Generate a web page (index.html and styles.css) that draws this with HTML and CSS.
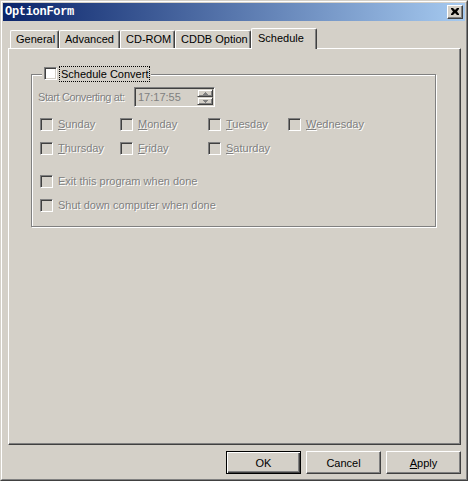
FILE: index.html
```html
<!DOCTYPE html>
<html>
<head>
<meta charset="utf-8">
<title>OptionForm</title>
<link rel="stylesheet" href="styles.css">
</head>
<body>
<div class="window">
  <div class="frame">
    <div class="titlebar">
      <span class="title">OptionForm</span>
      <div class="close">
        <svg width="8" height="7" viewBox="0 0 8 7"><path d="M0 0h2l2 2 2-2h2v1L6 3.5 8 6v1H6L4 5 2 7H0V6l2-2.5L0 1z" fill="#000"/></svg>
      </div>
    </div>
    <div class="content">
      <div class="tabs">
        <div class="tab t-general">General</div>
        <div class="tab t-advanced">Advanced</div>
        <div class="tab t-cdrom">CD-ROM</div>
        <div class="tab t-cddb">CDDB Option</div>
        <div class="tab active">Schedule</div>
      </div>
      <div class="panel">
        <div class="group">
          <div class="legend">
            <span class="cb"></span>
            <span class="focus">Schedule Convert</span>
          </div>
          <div class="time-row">
            <span class="label disabled">Start Converting at:</span>
            <div class="timebox">
              <span class="time-text">17:17:55</span>
              <div class="spin">
                <div class="spin-btn"><svg width="5" height="3" viewBox="0 0 5 3"><path d="M2 0h1v1h1v1h1v1H0V2h1V1h1z" fill="#808080"/></svg></div>
                <div class="spin-btn"><svg width="5" height="3" viewBox="0 0 5 3"><path d="M0 0h5v1H4v1H3v1H2V2H1V1H0z" fill="#808080"/></svg></div>
              </div>
            </div>
          </div>
          <div class="days">
            <div class="item"><span class="cb off"></span><span class="disabled"><u>S</u>unday</span></div>
            <div class="item"><span class="cb off"></span><span class="disabled"><u>M</u>onday</span></div>
            <div class="item"><span class="cb off"></span><span class="disabled"><u>T</u>uesday</span></div>
            <div class="item"><span class="cb off"></span><span class="disabled"><u>W</u>ednesday</span></div>
            <div class="item"><span class="cb off"></span><span class="disabled"><u>T</u>hursday</span></div>
            <div class="item"><span class="cb off"></span><span class="disabled"><u>F</u>riday</span></div>
            <div class="item"><span class="cb off"></span><span class="disabled"><u>S</u>aturday</span></div>
          </div>
          <div class="opts">
            <div class="item"><span class="cb off"></span><span class="disabled">Exit this program when done</span></div>
            <div class="item"><span class="cb off"></span><span class="disabled">Shut down computer when done</span></div>
          </div>
        </div>
      </div>
      <div class="buttons">
        <div class="btn default">OK</div>
        <div class="btn">Cancel</div>
        <div class="btn"><u>A</u>pply</div>
      </div>
    </div>
  </div>
</div>
</body>
</html>
```
FILE: styles.css
```css
html, body {
  margin: 0;
  padding: 0;
  background: #D4D0C8;
}

body {
  font-family: "Liberation Sans", Arial, sans-serif;
  font-size: 11px;
  color: #000;
}

.window {
  width: 468px;
  height: 481px;
  box-sizing: border-box;
  border: 1px solid;
  border-color: #D4D0C8 #404040 #404040 #D4D0C8;
  background: #D4D0C8;
}

.frame {
  height: 100%;
  box-sizing: border-box;
  border: 1px solid;
  border-color: #FFFFFF #808080 #808080 #FFFFFF;
  padding: 1px;
  display: flex;
  flex-direction: column;
}

.titlebar {
  height: 18px;
  flex: none;
  background: linear-gradient(to right, #0A246A, #A6CAF0);
  display: flex;
  align-items: center;
  justify-content: space-between;
  padding: 0 2px 0 2px;
}

.title {
  font-family: "Liberation Mono", "Courier New", monospace;
  font-weight: bold;
  font-size: 12px;
  letter-spacing: -0.3px;
  color: #FFFFFF;
}

.close {
  width: 16px;
  height: 14px;
  box-sizing: border-box;
  border: 1px solid;
  border-color: #FFFFFF #404040 #404040 #FFFFFF;
  box-shadow: inset -1px -1px 0 #808080;
  background: #D4D0C8;
  display: flex;
  align-items: center;
  justify-content: center;
  padding-bottom: 1px;
  padding-right: 1px;
}

.close svg {
  display: block;
}

.content {
  flex: 1;
  display: flex;
  flex-direction: column;
  padding: 7px 4px 4px 5px;
}

.tabs {
  height: 20px;
  flex: none;
  display: flex;
  align-items: flex-end;
  padding-left: 2px;
}

.tab {
  height: 18px;
  box-sizing: border-box;
  line-height: 17px;
  padding-left: 5px;
  border-top: 1px solid #FFFFFF;
  border-left: 1px solid #FFFFFF;
  border-right: 1px solid #404040;
  box-shadow: inset -1px 0 0 #808080;
  border-top-left-radius: 2px;
  border-top-right-radius: 2px;
  white-space: nowrap;
}

.t-general { width: 49px; }
.t-advanced { width: 61px; }
.t-cdrom { width: 55px; }
.t-cddb { width: 76px; }

.tab.active {
  width: 66px;
  height: 21px;
  margin-bottom: -1px;
  line-height: 18px;
  padding-left: 6px;
  position: relative;
  z-index: 1;
  background: #D4D0C8;
}

.panel {
  flex: 1;
  box-sizing: border-box;
  border: 1px solid;
  border-color: #FFFFFF #404040 #404040 #FFFFFF;
  box-shadow: inset -1px -1px 0 #808080;
  padding-top: 25px;
  padding-left: 22px;
}

.group {
  position: relative;
  width: 405px;
  height: 153px;
  box-sizing: border-box;
  border: 1px solid #808080;
  box-shadow: inset 1px 1px 0 #FFFFFF, 1px 1px 0 #FFFFFF;
  padding: 12px 0 0 6px;
}

.legend {
  position: absolute;
  left: 10px;
  top: -9px;
  height: 15px;
  padding: 0 2px;
  background: #D4D0C8;
  display: flex;
  align-items: center;
  gap: 3px;
}

.focus {
  outline: 1px dotted #000;
  outline-offset: 0;
  padding: 0 1px;
  line-height: 14px;
}

.cb {
  display: block;
  flex: none;
  width: 13px;
  height: 13px;
  box-sizing: border-box;
  border: 1px solid;
  border-color: #808080 #FFFFFF #FFFFFF #808080;
  box-shadow: inset 1px 1px 0 #404040, inset -1px -1px 0 #D4D0C8;
  background: #FFFFFF;
}

.cb.off {
  background: #D4D0C8;
}

.disabled {
  color: #808080;
  text-shadow: 1px 1px 0 #FFFFFF;
  white-space: nowrap;
}

.time-row {
  display: flex;
  align-items: center;
  height: 20px;
}

.label {
  width: 96px;
  letter-spacing: -0.4px;
}

.timebox {
  width: 81px;
  height: 20px;
  box-sizing: border-box;
  border: 1px solid;
  border-color: #808080 #FFFFFF #FFFFFF #808080;
  box-shadow: inset 1px 1px 0 #404040, inset -1px -1px 0 #D4D0C8;
  padding: 2px 1px 1px 2px;
  display: flex;
  justify-content: space-between;
}

.time-text {
  color: #808080;
  line-height: 14px;
  padding-left: 1px;
}

.spin {
  width: 16px;
  display: flex;
  flex-direction: column;
  margin-top: -1px;
}

.spin-btn {
  flex: 1;
  box-sizing: border-box;
  border: 1px solid;
  border-color: #D4D0C8 #404040 #404040 #D4D0C8;
  box-shadow: inset 1px 1px 0 #FFFFFF, inset -1px -1px 0 #808080;
  display: flex;
  align-items: center;
  justify-content: center;
}

.spin-btn svg {
  display: block;
}

.days {
  margin-top: 11px;
  padding-left: 2px;
  display: grid;
  grid-template-columns: 80px 88px 80px auto;
  grid-auto-rows: 13px;
  row-gap: 11px;
}

.item {
  display: flex;
  align-items: center;
  gap: 5px;
  height: 13px;
  line-height: 13px;
}

.opts {
  margin-top: 20px;
  padding-left: 2px;
  display: flex;
  flex-direction: column;
  gap: 11px;
}

.buttons {
  flex: none;
  margin-top: 6px;
  display: flex;
  justify-content: flex-end;
  gap: 5px;
}

.btn {
  width: 75px;
  height: 23px;
  box-sizing: border-box;
  border: 1px solid;
  border-color: #FFFFFF #404040 #404040 #FFFFFF;
  box-shadow: inset -1px -1px 0 #808080;
  display: flex;
  align-items: center;
  justify-content: center;
}

.btn.default {
  border-color: #000000;
  box-shadow: inset 1px 1px 0 #FFFFFF, inset -1px -1px 0 #404040, inset -2px -2px 0 #808080;
}
```
